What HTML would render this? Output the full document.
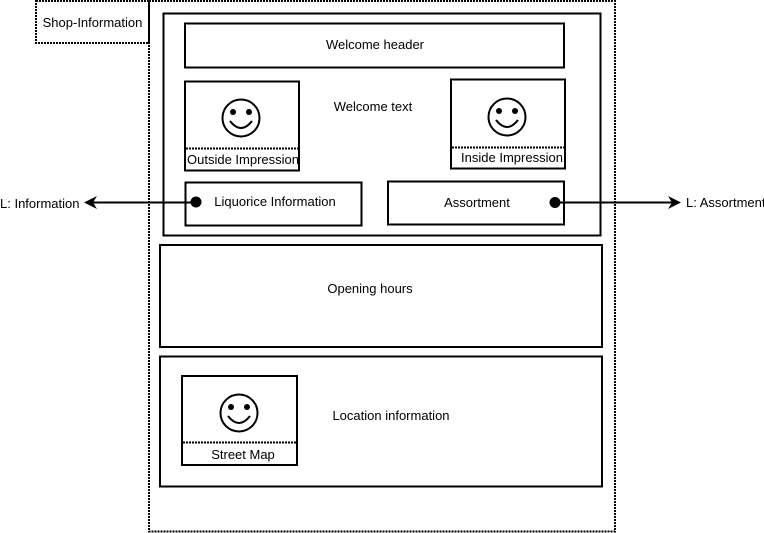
<!DOCTYPE html>
<html><head><meta charset="utf-8"><style>html,body{margin:0;padding:0;background:#fff;width:764px;height:533px;overflow:hidden}svg{display:block}text{font-family:"Liberation Sans",sans-serif;font-size:13px;fill:#000}</style></head><body>
<svg width="764" height="533" viewBox="0 0 764 533">
<defs>
<g id="smile"><circle cx="0" cy="0" r="18.5" fill="none" stroke="#000" stroke-width="2"/><circle cx="-8" cy="-6" r="3"/><circle cx="8" cy="-6" r="3"/><path d="M-11 3 Q0 17 11 3" fill="none" stroke="#000" stroke-width="2"/></g>
</defs>
<g fill="none" stroke="#000">
<rect x="36" y="1" width="113" height="42" stroke-width="2" stroke-dasharray="2 1"/>
<rect x="149" y="1" width="466" height="530.5" stroke-width="2" stroke-dasharray="2 1"/>
<rect x="163.5" y="13.5" width="437" height="222" stroke-width="2"/>
<rect x="185" y="23.5" width="379" height="44" stroke-width="2"/>
<rect x="185" y="81.5" width="114" height="89" stroke-width="2"/>
<line x1="186" y1="148.5" x2="298" y2="148.5" stroke-width="2" stroke-dasharray="2 1"/>
<rect x="451" y="79.5" width="114" height="89" stroke-width="2"/>
<line x1="452" y1="147.5" x2="564" y2="147.5" stroke-width="2" stroke-dasharray="2 1"/>
<rect x="185.5" y="182.5" width="176" height="43" stroke-width="2"/>
<rect x="388" y="181.5" width="176" height="43" stroke-width="2"/>
<rect x="160" y="245" width="442" height="102" stroke-width="2"/>
<rect x="160" y="356.5" width="442" height="130" stroke-width="2"/>
<rect x="182" y="376" width="115" height="89" stroke-width="2"/>
<line x1="183" y1="442.5" x2="296" y2="442.5" stroke-width="2" stroke-dasharray="2 1"/>
<line x1="196" y1="202.5" x2="92" y2="202.5" stroke-width="2"/>
<line x1="555" y1="202.5" x2="673" y2="202.5" stroke-width="2"/>
</g>
<circle cx="196" cy="202" r="5.5"/>
<circle cx="555" cy="202.5" r="5.5"/>
<path d="M84 202.5 L97 196 L93 202.5 L97 209 Z"/>
<path d="M681 202.5 L668 196 L672 202.5 L668 209 Z"/>
<use href="#smile" x="241" y="118"/>
<use href="#smile" x="507" y="117"/>
<use href="#smile" x="239" y="413"/>
<text x="92.5" y="27" text-anchor="middle">Shop-Information</text>
<text x="375" y="49" text-anchor="middle">Welcome header</text>
<text x="373" y="111" text-anchor="middle">Welcome text</text>
<text x="243" y="164" text-anchor="middle">Outside Impression</text>
<text x="512" y="162" text-anchor="middle">Inside Impression</text>
<text x="275" y="206" text-anchor="middle">Liquorice Information</text>
<text x="477" y="207" text-anchor="middle">Assortment</text>
<text x="0" y="208">L: Information</text>
<text x="686" y="207">L: Assortment</text>
<text x="370" y="293" text-anchor="middle">Opening hours</text>
<text x="391" y="420" text-anchor="middle">Location information</text>
<text x="243" y="459" text-anchor="middle">Street Map</text>
</svg>
</body></html>
